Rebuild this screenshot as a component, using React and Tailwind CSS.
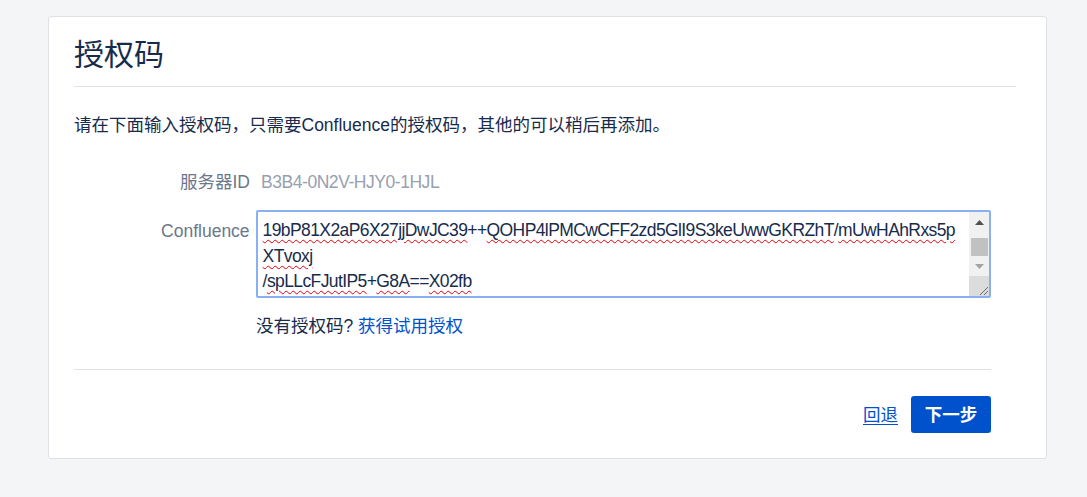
import React from 'react';

const Sq = ({ children }) => (
  <span className="underline decoration-wavy decoration-red-600 decoration-1 underline-offset-[3px]">{children}</span>
);

const LicenseBox = () => (
  <div className="flex w-[737px] h-[88px] border-2 border-[#8ab0f4] rounded-[2px] bg-white overflow-hidden">
    {/* text content */}
    <div className="flex-1 min-w-0 pl-[5px] pt-[6px] text-[17.5px] leading-[25.5px] tracking-[-0.6px] text-[#172b4d] whitespace-nowrap overflow-hidden">
      <div>
        <Sq>19bP81X2aP6X27jjDwJC39</Sq>++<Sq>QOHP4lPMCwCFF2zd5GlI9S3keUwwGKRZhT</Sq>/<Sq>mUwHAhRxs5p</Sq>
      </div>
      <div>
        <Sq>XTvoxj</Sq>
      </div>
      <div>
        /<Sq>spLLcFJutIP5</Sq>+<Sq>G8A</Sq>==<Sq>X02fb</Sq>
      </div>
    </div>
    {/* scrollbar */}
    <div className="w-[20px] flex flex-col bg-[#f1f1f1]">
      <div className="h-[20px] flex items-center justify-center">
        <svg width="9" height="5" viewBox="0 0 9 5"><path d="M4.5 0 L9 5 L0 5 Z" fill="#505050" /></svg>
      </div>
      <div className="flex-1 flex flex-col justify-end pl-[2px] pr-[1px]">
        <div className="h-[18px] bg-[#c1c1c1]" />
      </div>
      <div className="h-[20px] flex items-center justify-center">
        <svg width="9" height="5" viewBox="0 0 9 5"><path d="M0 0 L9 0 L4.5 5 Z" fill="#a3a3a3" /></svg>
      </div>
      <div className="h-[20px] bg-[#dcdcdc] flex items-end justify-end">
        <svg width="12" height="12" viewBox="0 0 12 12">
          <path d="M11 3 L3 11 M11 7 L7 11" stroke="#6b6b6b" strokeWidth="1" />
        </svg>
      </div>
    </div>
  </div>
);

export default function App() {
  return (
    <div className="min-h-[497px] bg-[#f4f5f7] pt-4 pl-12 font-['Liberation_Sans','Noto_Sans_CJK_SC',sans-serif]">
      <div className="w-[999px] h-[443px] bg-white border border-[#dfe1e6] rounded-[3px] pl-[25px] pr-[30px]">
        {/* Header */}
        <div className="pt-[19px] pb-[13px] border-b border-[#dfe1e6]">
          <h1 className="text-[30px] leading-[37px] text-[#172b4d] font-normal">授权码</h1>
        </div>

        <p className="mt-[25px] text-[17.5px] leading-[26px] text-[#172b4d]">
          请在下面输入授权码，只需要Confluence的授权码，其他的可以稍后再添加。
        </p>

        {/* Form */}
        <div className="w-[917px] text-[17.5px] leading-[26px]">
          <div className="mt-[31px] flex gap-[6px]">
            <div className="w-[176px] text-right text-[#6b778c]">服务器ID</div>
            <div className="pl-[5px] tracking-[-0.45px] text-[#97a0af]">B3B4-0N2V-HJY0-1HJL</div>
          </div>

          <div className="mt-[15px] flex gap-[6px]">
            <div className="w-[176px] pt-[8px] text-right text-[#6b778c]">Confluence</div>
            <LicenseBox />
          </div>

          <div className="mt-[15px] pl-[182px] text-[#172b4d]">
            没有授权码? <a href="#" className="text-[#0052cc]">获得试用授权</a>
          </div>

          {/* Footer */}
          <div className="mt-[30px] pt-[26px] border-t border-[#dfe1e6] flex justify-end items-center">
            <a href="#" className="mr-[13px] text-[#0052cc] underline underline-offset-[3px]">回退</a>
            <button className="w-[80px] h-[37px] rounded-[3px] bg-[#0052cc] text-white font-bold flex items-center justify-center">
              下一步
            </button>
          </div>
        </div>
      </div>
    </div>
  );
}
